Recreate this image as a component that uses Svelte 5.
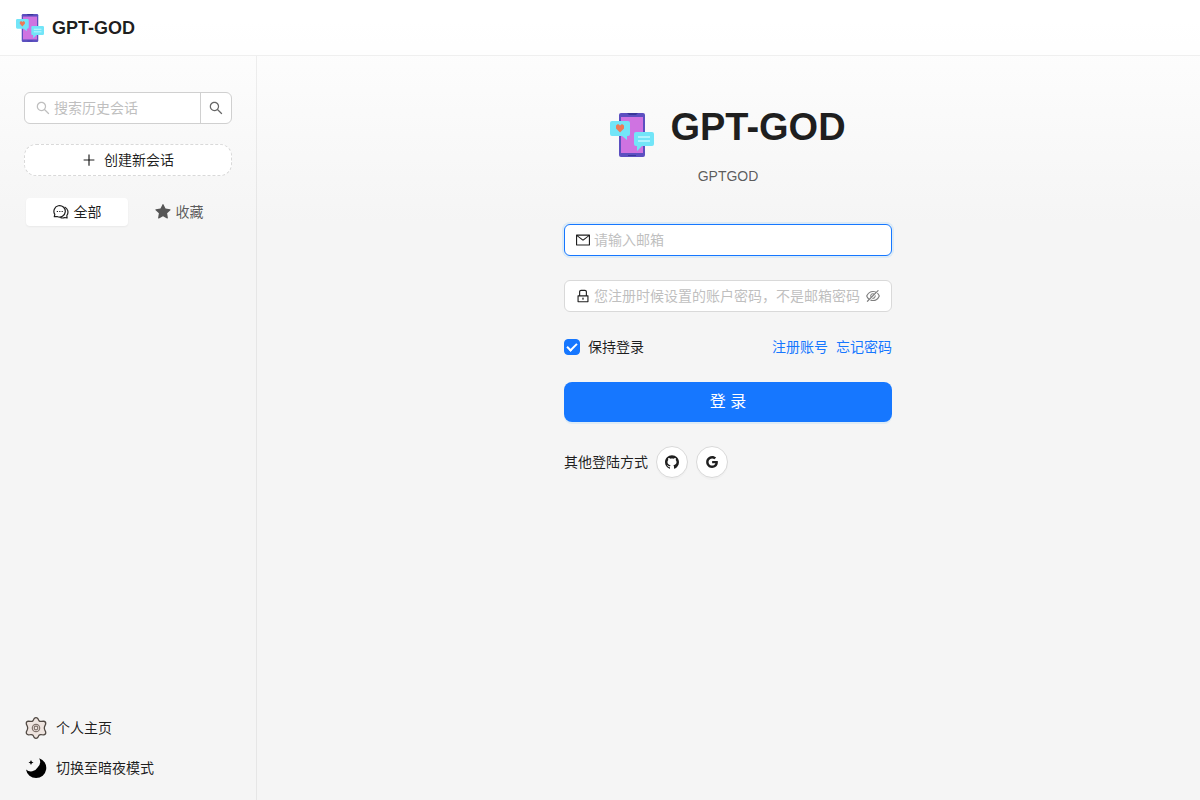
<script>
  let search = $state('');
  let email = $state('');
  let password = $state('');
  let remember = $state(true);

  const icons = {
    search: ['M909.6 854.5L649.9 594.8C690.2 542.7 712 479 712 412c0-80.2-31.3-155.4-87.9-212.1-56.6-56.7-132-87.9-212.1-87.9s-155.5 31.3-212.1 87.9C143.2 256.5 112 331.8 112 412c0 80.1 31.3 155.5 87.9 212.1C256.5 680.8 331.8 712 412 712c67 0 130.6-21.8 182.7-62l259.7 259.6a8.2 8.2 0 0011.6 0l43.6-43.5a8.2 8.2 0 000-11.6zM570.4 570.4C528 612.7 471.8 636 412 636s-116-23.3-158.4-65.6C211.3 528 188 471.8 188 412s23.3-116.1 65.6-158.4C296 211.3 352.2 188 412 188s116.1 23.2 158.4 65.6S636 352.2 636 412s-23.3 116.1-65.6 158.4z'],
    plus: ['M482 152h60q8 0 8 8v704q0 8-8 8h-60q-8 0-8-8V160q0-8 8-8z', 'M176 474h672q8 0 8 8v60q0 8-8 8H176q-8 0-8-8v-60q0-8 8-8z'],
    star: ['M908.1 353.1l-253.9-36.9L540.7 86.1c-3.1-6.3-8.2-11.4-14.5-14.5-15.8-7.8-35-1.3-42.9 14.5L369.8 316.2l-253.9 36.9c-7 1-13.4 4.3-18.3 9.3a32.05 32.05 0 00.6 45.3l183.7 179.1-43.4 252.9a31.95 31.95 0 0046.4 33.7L512 754l227.1 119.4c6.2 3.3 13.4 4.4 20.3 3.2 17.4-3 29.1-19.5 26.1-36.9l-43.4-252.9 183.7-179.1c5-4.9 8.3-11.3 9.3-18.3 2.7-17.5-9.5-33.7-27-36.3z'],
    mail: ['M928 160H96c-17.7 0-32 14.3-32 32v640c0 17.7 14.3 32 32 32h832c17.7 0 32-14.3 32-32V192c0-17.7-14.3-32-32-32zm-40 110.8V792H136V270.8l-27.6-21.5 39.3-50.5 42.8 33.3h643.1l42.8-33.3 39.3 50.5-27.7 21.5zM833.6 232L512 482 190.4 232l-42.8-33.3-39.3 50.5 27.6 21.5 341.6 265.6a55.99 55.99 0 0068.7 0L888 270.8l27.6-21.5-39.3-50.5-42.7 33.2z'],
    lock: ['M832 464h-68V240c0-70.7-57.3-128-128-128H388c-70.7 0-128 57.3-128 128v224h-68c-17.7 0-32 14.3-32 32v384c0 17.7 14.3 32 32 32h640c17.7 0 32-14.3 32-32V496c0-17.7-14.3-32-32-32zM332 240c0-30.9 25.1-56 56-56h248c30.9 0 56 25.1 56 56v224H332V240zm460 600H232V536h560v304zM484 701v53c0 4.4 3.6 8 8 8h40c4.4 0 8-3.6 8-8v-53a48.01 48.01 0 10-56 0z'],
    eye: ['M942.2 486.2Q889.47 375.11 816.7 305l-50.88 50.88C807.31 395.53 843.45 447.4 874.7 512 791.5 684.2 673.4 766 512 766q-72.67 0-133.87-22.38L323 798.75Q408 838 512 838q288.3 0 430.2-300.3a60.29 60.29 0 000-51.5zm-63.57-320.64L836 122.88a8 8 0 00-11.32 0L715.31 232.2Q624.86 186 512 186q-288.3 0-430.2 300.3a60.3 60.3 0 000 51.5q56.69 119.4 136.5 191.41L112.48 835a8 8 0 000 11.31L155.17 889a8 8 0 0011.31 0l712.15-712.12a8 8 0 000-11.32zM149.3 512C232.6 339.8 350.7 258 512 258c54.54 0 104.13 9.36 149.12 28.39l-70.3 70.3a176 176 0 00-238.13 238.13l-83.42 83.42C223.1 637.49 183.3 582.28 149.3 512zm246.7 0a112.11 112.11 0 01146.2-106.69L401.31 546.2A112 112 0 01396 512z', 'M508 624c-3.46 0-6.87-.16-10.25-.47l-52.82 52.82a176.09 176.09 0 00227.42-227.42l-52.82 52.82c.31 3.38.47 6.79.47 10.25a111.94 111.94 0 01-112 112z'],
    github: ['M511.6 76.3C264.3 76.2 64 276.4 64 523.5 64 718.9 189.3 885 363.8 946c23.5 5.9 19.9-10.8 19.9-22.2v-77.5c-135.7 15.9-141.2-73.9-150.3-88.9C215 726 171.5 718 184.5 703c30.9-15.9 62.4 4 98.9 57.9 26.4 39.1 77.9 32.5 104 26 5.7-23.5 17.9-44.5 34.7-60.8-140.6-25.2-199.2-111-199.2-213 0-49.5 16.3-95 48.3-131.7-20.4-60.5 1.9-112.3 4.9-120 58.1-5.2 118.5 41.6 123.2 45.3 33-8.9 70.7-13.6 112.9-13.6 42.4 0 80.2 4.9 113.5 13.9 11.3-8.6 67.3-48.8 121.3-43.9 2.9 7.7 24.7 58.3 5.5 118 32.4 36.8 48.9 82.7 48.9 132.3 0 102.2-59 188.1-200 212.9a127.5 127.5 0 0138.1 91v112.5c.8 9 0 17.9 15 17.9 177.1-59.7 304.6-227 304.6-424.1 0-247.2-200.4-447.3-447.5-447.3z'],
    google: ['M881 442.4H519.7v148.5h206.7c-8.9 48-35.9 88.6-76.6 115.8-34.4 23-78.3 36.6-129.9 36.6-99.9 0-184.4-67.5-214.6-158.2-7.6-23-12-47.6-12-72.9s4.4-49.9 12-72.9c30.3-90.6 114.8-158.1 214.7-158.1 56.3 0 106.8 19.4 146.6 57.4l110-110.1c-66.5-62-153.2-100-256.6-100-149.9 0-279.6 86-342.7 211.4-26 51.8-40.8 110.4-40.8 172.4S151 632.8 177 684.6C240.1 810 369.8 896 519.7 896c103.6 0 190.4-34.4 253.8-93 72.5-66.8 114.4-165.2 114.4-282.1 0-27.2-2.4-53.3-6.9-78.5z']
  };
</script>

{#snippet icon(name, size)}
  <svg class="icon" viewBox="64 64 896 896" width={size} height={size} fill="currentColor" aria-hidden="true">
    {#each icons[name] as d}<path {d} />{/each}
  </svg>
{/snippet}

{#snippet logo(size)}
  <svg class="icon" viewBox="0 0 44 44" width={size} height={size} aria-hidden="true">
    <rect x="9" y="0" width="26" height="44" rx="2" fill="#5c4fc0" />
    <path d="M17 0h11l-2 2h-7zM18 42h8v1h-8z" fill="#39379b" />
    <path d="M11 4h22v36H11z" fill="#cf73e1" />
    <path d="M2 8h16q2 0 2 2v11q0 2-2 2h-1v4l-5-4H2q-2 0-2-2V10q0-2 2-2z" fill="#72e5f8" />
    <path d="M10 19.500l-4-4v-3l2-1.500 2 1.500 2-1.500 2 1.500v3z" fill="#ee7956" />
    <path d="M26 19h16q2 0 2 2v10q0 2-2 2H32l-5 5v-5h-1q-2 0-2-2V21q0-2 2-2z" fill="#72e5f8" />
    <path d="M28 24h12M28 28h12" stroke="#c5f8ff" stroke-width="1.500" />
  </svg>
{/snippet}

<div class="page">
  <header>
    <a class="brand" href="#home">{@render logo(28)}<span>GPT-GOD</span></a>
  </header>

  <div class="body">
    <aside>
      <form class="search" role="search" onsubmit={(e) => e.preventDefault()}>
        <label>
          {@render icon('search', 14)}
          <input type="text" placeholder="搜索历史会话" aria-label="搜索历史会话" bind:value={search} />
        </label>
        <button type="submit" aria-label="搜索">{@render icon('search', 14)}</button>
      </form>

      <button class="create" type="button">{@render icon('plus', 14)}<span>创建新会话</span></button>

      <div class="tabs">
        <button class="active" type="button" aria-pressed="true">
          <svg class="icon" viewBox="0 0 16 16" width="16" height="16" fill="none" stroke="currentColor" stroke-width="1.200" stroke-linejoin="round" aria-hidden="true">
            <path d="M1.300 12.700l.5-2.300A5.700 5.700 0 1 1 4.200 12.500z" />
            <path d="M11.600 3a5.600 5.600 0 0 1 2.200 8.500l.3 2.500-2.300-.5a5.600 5.600 0 0 1-4.500 0" />
            <path d="M3.800 7.500h1.200M6.200 7.500h1.200M8.600 7.500h1.200" />
          </svg>
          <span>全部</span>
        </button>
        <button type="button" aria-pressed="false">{@render icon('star', 16)}<span>收藏</span></button>
      </div>

      <nav>
        <a href="#profile">
          <svg class="icon" viewBox="0 0 24 24" width="24" height="24" fill="#eee4df" stroke="#514943" stroke-width="1.300" stroke-linejoin="round" aria-hidden="true">
            <path d="M10.200 2.500Q12 .6 13.800 2.500L15 4.700Q16 5.700 17.500 5.300L19.500 5.200Q22 5.500 21.700 8L20.600 10.500Q20 12 20.600 13.500L21.700 16Q22 18.500 19.500 18.800L17.500 18.700Q16 18.300 15 19.300L13.800 21.500Q12 23.400 10.200 21.500L9 19.300Q8 18.300 6.500 18.700L4.500 18.800Q2 18.500 2.300 16L3.400 13.500Q4 12 3.400 10.500L2.300 8Q2 5.500 4.500 5.200L6.500 5.300Q8 5.700 9 4.700z" />
            <circle cx="12" cy="12" r="3.700" stroke="#80736c" stroke-width="1.200" />
            <circle cx="12" cy="12" r="1.800" stroke="#80736c" stroke-width="1.200" />
          </svg>
          <span>个人主页</span>
        </a>
        <button type="button">
          <svg class="icon" viewBox="0 0 24 24" width="24" height="24" fill="#000" aria-hidden="true">
            <path d="M15.200 2.200A10.200 10.200 0 1 1 2 13.500A7.600 7.600 0 0 0 13.600 11.500A8 8 0 0 0 15.200 2.200z" />
            <path d="M7 4l.8 1.700 1.700.8-1.700.8L7 9l-.8-1.700-1.700-.8 1.700-.8z" />
          </svg>
          <span>切换至暗夜模式</span>
        </button>
      </nav>
    </aside>

    <main>
      <div class="login">
        <div class="title">{@render logo(44)}<h1>GPT-GOD</h1></div>
        <p>GPTGOD</p>
        <form onsubmit={(e) => e.preventDefault()}>
          <label class="field focused">
            {@render icon('mail', 14)}
            <input type="email" placeholder="请输入邮箱" aria-label="邮箱" bind:value={email} />
          </label>
          <div class="field">
            {@render icon('lock', 14)}
            <input type="password" placeholder="您注册时候设置的账户密码，不是邮箱密码" aria-label="密码" bind:value={password} />
            <button class="reveal" type="button" aria-label="显示密码">{@render icon('eye', 14)}</button>
          </div>
          <div class="options">
            <label><input type="checkbox" bind:checked={remember} /><span>保持登录</span></label>
            <div class="links"><a href="#register">注册账号</a><a href="#forgot">忘记密码</a></div>
          </div>
          <button class="submit" type="submit">登 录</button>
        </form>
        <div class="others">
          <span>其他登陆方式</span>
          <button type="button" aria-label="GitHub">{@render icon('github', 14)}</button>
          <button type="button" aria-label="Google">{@render icon('google', 14)}</button>
        </div>
      </div>
    </main>
  </div>
</div>

<style>
  :global(body) {
    margin: 0;
  }
  .page,
  .page * {
    box-sizing: border-box;
  }
  .page {
    display: flex;
    flex-direction: column;
    min-height: 100vh;
    font-family: "Liberation Sans", "Noto Sans CJK SC", sans-serif;
    font-size: 14px;
    line-height: 22px;
    color: rgba(0, 0, 0, 0.88);
    background: linear-gradient(#fff, #f5f5f5 28%);
  }
  button,
  input {
    font: inherit;
    color: inherit;
    margin: 0;
    padding: 0;
    border: 0;
    background: none;
  }
  button {
    cursor: pointer;
  }
  a {
    color: inherit;
    text-decoration: none;
  }
  .icon {
    display: block;
    flex: none;
  }
  header {
    display: flex;
    align-items: center;
    height: 56px;
    padding: 0 16px;
    background: rgba(255, 255, 255, 0.6);
    border-bottom: 1px solid rgba(5, 5, 5, 0.06);
  }
  .brand {
    display: flex;
    align-items: center;
    gap: 8px;
    font-size: 18px;
    font-weight: 700;
  }
  .body {
    display: flex;
    flex: 1;
  }
  aside {
    display: flex;
    flex-direction: column;
    flex: none;
    width: 256px;
    padding: 36px 24px 16px;
    box-shadow: 1px 0 0 rgba(5, 5, 5, 0.06);
  }
  .search {
    display: flex;
    height: 32px;
    border: 1px solid #d0d0d0;
    border-radius: 6px;
    background: #fff;
  }
  .search label {
    display: flex;
    flex: 1;
    align-items: center;
    gap: 4px;
    min-width: 0;
    padding: 0 11px;
    color: #bfbfbf;
  }
  .search input,
  .field input {
    flex: 1;
    width: 0;
    min-width: 0;
    outline: 0;
    color: rgba(0, 0, 0, 0.88);
  }
  input::placeholder {
    color: #bfbfbf;
    opacity: 1;
  }
  .search button {
    display: grid;
    place-items: center;
    width: 31px;
    border-left: 1px solid #d0d0d0;
    color: rgba(0, 0, 0, 0.6);
  }
  .create {
    display: flex;
    align-items: center;
    justify-content: center;
    gap: 8px;
    height: 32px;
    margin-top: 20px;
    border: 1px dashed #d9d9d9;
    border-radius: 12px;
    background: #fff;
  }
  .tabs {
    display: flex;
    margin-top: 20px;
    padding: 2px;
  }
  .tabs button {
    display: flex;
    flex: 1;
    align-items: center;
    justify-content: center;
    gap: 5px;
    height: 28px;
    border-radius: 4px;
    color: rgba(0, 0, 0, 0.65);
  }
  .tabs .active {
    color: rgba(0, 0, 0, 0.88);
    background: #fff;
    box-shadow: 0 1px 2px rgba(0, 0, 0, 0.05);
  }
  nav {
    display: flex;
    flex-direction: column;
    align-items: flex-start;
    gap: 8px;
    margin-top: auto;
  }
  nav a,
  nav button {
    display: flex;
    align-items: center;
    gap: 8px;
    height: 32px;
  }
  main {
    display: flex;
    flex: 1;
    justify-content: center;
    align-items: flex-start;
    padding: 48px 16px;
  }
  .login {
    width: 100%;
    max-width: 328px;
  }
  .title {
    display: flex;
    justify-content: center;
    align-items: flex-end;
    gap: 16px;
    height: 53px;
  }
  h1 {
    align-self: flex-start;
    margin: 0;
    font-size: 38px;
    line-height: 46px;
    font-weight: 700;
  }
  p {
    margin: 7px 0 36px;
    line-height: 24px;
    text-align: center;
    color: rgba(0, 0, 0, 0.65);
  }
  .login form {
    display: flex;
    flex-direction: column;
    gap: 24px;
  }
  .field {
    display: flex;
    align-items: center;
    gap: 4px;
    height: 32px;
    padding: 0 11px;
    border: 1px solid #d9d9d9;
    border-radius: 6px;
    background: #fff;
  }
  .focused {
    border-color: #1677ff;
    box-shadow: 0 0 0 2px rgba(5, 145, 255, 0.1);
  }
  .reveal {
    color: rgba(0, 0, 0, 0.5);
  }
  .options,
  .options label,
  .links,
  .others {
    display: flex;
    align-items: center;
    gap: 8px;
  }
  .options {
    justify-content: space-between;
  }
  .options input {
    appearance: none;
    width: 16px;
    height: 16px;
    border: 1px solid #d9d9d9;
    border-radius: 4px;
    background: #fff;
  }
  .options input:checked {
    display: grid;
    place-items: center;
    border-color: #1677ff;
    background: #1677ff;
  }
  .options input:checked::before {
    content: "";
    box-sizing: border-box;
    width: 6px;
    height: 10px;
    border: solid #fff;
    border-width: 0 2px 2px 0;
    transform: translateY(-1px) rotate(45deg);
  }
  .links {
    color: #1677ff;
  }
  .submit {
    height: 40px;
    border-radius: 8px;
    font-size: 16px;
    line-height: 24px;
    color: #fff;
    background: #1677ff;
    box-shadow: 0 2px 0 rgba(5, 145, 255, 0.1);
  }
  .others {
    margin-top: 24px;
  }
  .others button {
    display: grid;
    place-items: center;
    width: 32px;
    height: 32px;
    border: 1px solid #d9d9d9;
    border-radius: 50%;
    background: #fff;
    box-shadow: 0 2px 0 rgba(0, 0, 0, 0.02);
  }
</style>
